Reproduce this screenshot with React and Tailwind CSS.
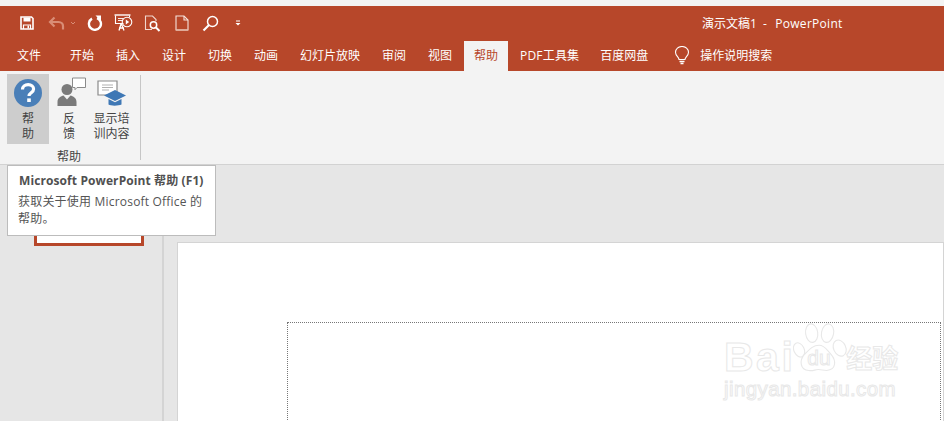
import React from 'react';

const tabs = [
  { label: '开始', cls: 'w-[46px]' },
  { label: '插入', cls: 'w-[46px]' },
  { label: '设计', cls: 'w-[46px]' },
  { label: '切换', cls: 'w-[46px]' },
  { label: '动画', cls: 'w-[46px]' },
  { label: '幻灯片放映', cls: 'w-[82px]' },
  { label: '审阅', cls: 'w-[46px]' },
  { label: '视图', cls: 'w-[46px]' },
];

const SaveIcon = () => (
  <svg width="16" height="16" viewBox="0 0 16 16" fill="none" stroke="white" strokeWidth="1.6">
    <path d="M2 2h10.5L14 3.5V14H2z" />
    <path d="M4.5 2.5h7v4h-7z" fill="white" stroke="none" />
    <path d="M4.5 14V10h7v4" strokeWidth="1.2" />
    <path d="M8.5 10.5h1.5v3H8.5z" fill="white" stroke="none" />
  </svg>
);

const UndoIcon = () => (
  <svg width="17" height="15" viewBox="0 0 17 15" fill="none" stroke="#d98d76" strokeWidth="2.2">
    <path d="M6.5 1.5 2 6l4.5 4.5" />
    <path d="M2.5 6h8c3 0 4.5 2 4.5 4v3.5" />
  </svg>
);

const RedoIcon = () => (
  <svg width="16" height="16" viewBox="0 0 16 16" fill="none" stroke="white" strokeWidth="2.4">
    <path d="M10 3.2a6 6 0 1 1-5 .4" />
    <path d="M8.5 0.5h5.5V6z" fill="white" stroke="none" />
  </svg>
);

const PresentIcon = () => (
  <svg width="19" height="18" viewBox="0 0 19 18" fill="none" stroke="white" strokeWidth="1.1">
    <path d="M0.5 1h16" strokeWidth="1.4" />
    <path d="M1.5 1.5v8h8" />
    <path d="M15.5 1.5v2" />
    <path d="M4 4.5h5M4 6.5h4" strokeWidth="0.9" />
    <circle cx="13" cy="8" r="4.8" />
    <path d="M11.8 5.6v4.8l3.4-2.4z" fill="white" stroke="none" />
    <path d="M7 10 5 16.5M7.5 10l2.5 6.5M5 14h5" strokeWidth="1.3" />
  </svg>
);

const PreviewIcon = () => (
  <svg width="17" height="17" viewBox="0 0 17 17" fill="none" stroke="white" strokeWidth="1.1">
    <path d="M8 14.5H1.5V1h7l3.5 3.5V6" stroke="#f1d7ce" />
    <circle cx="9.5" cy="10" r="3.2" strokeWidth="1.5" />
    <path d="m12 12.5 3.5 3.5" strokeWidth="2" />
  </svg>
);

const NewIcon = () => (
  <svg width="14" height="16" viewBox="0 0 14 16" fill="none" stroke="white" strokeWidth="1.1">
    <path d="M1 15V1h8l4 4v10z" stroke="#f6e3dc" />
    <path d="M9 1v4h4" stroke="#f6e3dc" />
    <path d="M1 15h12" strokeWidth="1.4" stroke="#e3b3a3" />
  </svg>
);

const SearchIcon = () => (
  <svg width="17" height="17" viewBox="0 0 17 17" fill="none" stroke="white">
    <circle cx="10.5" cy="6.5" r="5" strokeWidth="1.5" />
    <path d="M7 10 1.5 15.5" strokeWidth="2.2" />
  </svg>
);

const HelpIcon = () => (
  <svg width="28" height="28" viewBox="0 0 28 28">
    <circle cx="14" cy="14" r="14" fill="#4a7fb8" />
    <path
      d="M8.500 10.500c0-3 2.400-4.800 5.700-4.800 3.200 0 5.400 1.800 5.400 4.400 0 3.700-4.600 3.700-4.600 7"
      fill="none"
      stroke="white"
      strokeWidth="3.200"
    />
    <rect x="13.200" y="19.400" width="3.600" height="3.600" fill="white" />
  </svg>
);

const FeedbackIcon = () => (
  <svg width="30" height="30" viewBox="0 0 30 30">
    <circle cx="10" cy="12.500" r="5.500" fill="#7a7a7a" />
    <path d="M0.500 29v-4c0-4 3.500-6 6-6.500l3.500 4 3.500-4c2.500.5 6 2.500 6 6.500v4z" fill="#7a7a7a" />
    <path d="M15.500 1H28.500v9.500H20l-2 2.200v-2.200h-2.500z" fill="white" stroke="#8a8a8a" strokeWidth="1" />
  </svg>
);

const TrainingIcon = () => (
  <svg width="30" height="27" viewBox="0 0 30 27">
    <path d="M1 1h19v14H1z" fill="white" stroke="#8a8a8a" strokeWidth="1.200" />
    <path d="M5 5h11M5 7.500h11M5 10h7" stroke="#a8a8a8" strokeWidth="0.900" />
    <path d="M18 10 29 15.500 18 21 7 15.500z" fill="#3f78b5" />
    <path d="M11.500 19v5.500c2 1.500 10 1.500 13 0V19L18 22.300z" fill="#3f78b5" />
  </svg>
);

const Bulb = () => (
  <svg width="16" height="19" viewBox="0 0 16 19" fill="none" stroke="white" strokeWidth="1.100">
    <path d="M5 13.500c0-2.500-3.500-3.500-3.500-7.200a6.500 5.800 0 0 1 13 0C14.500 10 11 11 11 13.500z" />
    <path d="M5.500 15.500h5M6.500 17.500h3" strokeWidth="1.300" />
  </svg>
);

const Paw = () => (
  <svg width="56" height="58" viewBox="0 0 60 58" fill="white" stroke="#e8e8e8" strokeWidth="1.200">
    <ellipse cx="20" cy="12" rx="6.500" ry="10" transform="rotate(-8 20 12)" />
    <ellipse cx="37" cy="12" rx="6.500" ry="10" transform="rotate(10 37 12)" />
    <ellipse cx="6.500" cy="30" rx="5.500" ry="8" transform="rotate(-25 6.500 30)" />
    <ellipse cx="50" cy="28" rx="6.500" ry="9" transform="rotate(-25 50 28)" />
    <path d="M28 25c6 0 8 5 13 10 5 6 6 16-5 17-4 0-5-1-9-1s-5 2-10 1c-10-1-10-11-5-17 5-5 9-10 16-10z" />
  </svg>
);

export default function App() {
  return (
    <div
      className="relative h-[421px] w-[944px] overflow-hidden bg-[#e6e6e6] text-[12px] leading-[15px] text-[#444444]"
      style={{ fontFamily: '"Open Sans", "Noto Sans CJK SC", sans-serif' }}
    >
      <div className="h-[6px] bg-[#f3f3f3]" />

      {/* Title bar */}
      <div className="flex h-[34px] items-center bg-[#b7472a] pl-[19px] text-white">
        <SaveIcon />
        <div className="ml-[13px]"><UndoIcon /></div>
        <svg className="ml-[5px]" width="6" height="4" viewBox="0 0 6 4" fill="none" stroke="#d98d76">
          <path d="m1 1 2 2 2-2" />
        </svg>
        <div className="ml-[11px]"><RedoIcon /></div>
        <div className="ml-[11px]"><PresentIcon /></div>
        <div className="ml-[11px]"><PreviewIcon /></div>
        <div className="ml-[14px]"><NewIcon /></div>
        <div className="ml-[13px]"><SearchIcon /></div>
        <svg className="ml-[16px]" width="6" height="6" viewBox="0 0 6 6" fill="white">
          <path d="M1 0.500h4v1H1zM0.500 3h5L3 5.500z" />
        </svg>
        <span className="ml-[461px] whitespace-nowrap">演示文稿1&nbsp;&nbsp;-&nbsp;&nbsp;</span>
        <span className="ml-[2px] whitespace-nowrap tracking-[0.3px]">PowerPoint</span>
      </div>

      {/* Tabs */}
      <div className="flex h-[31px] items-stretch bg-[#b7472a] text-white">
        <div className="ml-[6px] flex w-[53px] items-center pb-[1px] pl-[11px]">文件</div>
        {tabs.map(t => (
          <div key={t.label} className={`flex items-center justify-center whitespace-nowrap pb-[1px] ${t.cls}`}>
            {t.label}
          </div>
        ))}
        <div className="ml-[1px] mt-[1px] flex w-[44px] items-center justify-center bg-[#f3f3f3] pb-[2px] text-[#b7472a]">
          帮助
        </div>
        <div className="ml-[12px] flex items-center whitespace-nowrap pb-[1px] tracking-[0.2px]">PDF工具集</div>
        <div className="ml-[21px] flex items-center whitespace-nowrap pb-[1px]">百度网盘</div>
        <div className="ml-[26px] flex items-center pb-[1px]"><Bulb /></div>
        <div className="ml-[10px] flex items-center whitespace-nowrap pb-[1px]">操作说明搜索</div>
      </div>

      {/* Ribbon */}
      <div className="flex h-[94px] border-b border-[#d2d2d2] bg-[#f3f3f3] pl-[7px] pt-[3px] text-[#444444]">
        <div className="flex w-[133px] flex-col items-start">
          <div className="flex h-[70px] items-start">
            <div className="flex h-[70px] w-[42px] flex-col items-center bg-[#cdcdcd] pt-[5px]">
              <HelpIcon />
              <div className="mt-[4px] text-center">帮<br />助</div>
            </div>
            <div className="flex h-[70px] w-[40px] flex-col items-center pt-[3px]">
              <div className="ml-[6px]"><FeedbackIcon /></div>
              <div className="mt-[4px] text-center">反<br />馈</div>
            </div>
            <div className="flex h-[70px] w-[45px] flex-col items-center pt-[6px]">
              <TrainingIcon />
              <div className="mt-[4px] whitespace-nowrap text-center">显示培<br />训内容</div>
            </div>
          </div>
          <div className="mt-[5px] w-[124px] text-center">帮助</div>
        </div>
        <div className="mb-[4px] mt-[1px] w-px bg-[#c6c6c6]" />
      </div>

      {/* Work area */}
      <div className="flex h-[256px]">
        <div className="w-[164px] shrink-0 border-r-2 border-[#d4d4d4] pl-[34px] pt-[10px]">
          <div className="h-[71px] w-[110px] border-[3px] border-[#b7472a] bg-white" />
        </div>
        <div className="flex-1 pl-[13px] pt-[77px]">
          <div className="h-[199px] border border-[#d4d4d4] bg-white pl-[109px] pt-[79px]">
            <div className="h-[120px] w-[654px] border border-dotted border-[#777777]" />
          </div>
        </div>
      </div>

      {/* Tooltip */}
      <div className="absolute left-[7px] top-[165px] h-[71px] w-[209px] border border-[#bcbcbc] bg-white pl-[11px] pt-[7px]">
        <div className="whitespace-nowrap font-bold leading-[16px] tracking-[0.1px] text-[#505050]">Microsoft PowerPoint 帮助 (F1)</div>
        <div className="-ml-[1px] mt-[4px] w-[192px] leading-[17px] tracking-[0.2px] text-[#555555]">获取关于使用 Microsoft Office 的帮助。</div>
      </div>

      {/* Watermark */}
      <div className="absolute left-[724px] top-[320px] h-[82px] w-[175px] text-transparent" style={{ fontFamily: '"Liberation Sans", "Noto Sans CJK SC", sans-serif' }}>
        <div className="flex items-start">
          <span className="mt-[17px] text-[41px] font-bold leading-[40px] tracking-[2.5px] [-webkit-text-stroke:1px_#e8e8e8]">Bai</span>
          <div className="relative -ml-[2px] shrink-0">
            <Paw />
            <span className="absolute left-[14px] top-[27px] text-[21px] leading-[22px] [-webkit-text-stroke:1px_#e8e8e8]">du</span>
          </div>
          <span className="-ml-[3px] mt-[25px] whitespace-nowrap text-[26px] font-bold leading-[28px] [-webkit-text-stroke:1px_#e8e8e8]">经验</span>
        </div>
        <div className="-mt-[1px] whitespace-nowrap text-[20.5px] leading-[24px] tracking-[0.4px] [-webkit-text-stroke:1px_#e8e8e8]">jingyan.baidu.com</div>
      </div>
    </div>
  );
}
